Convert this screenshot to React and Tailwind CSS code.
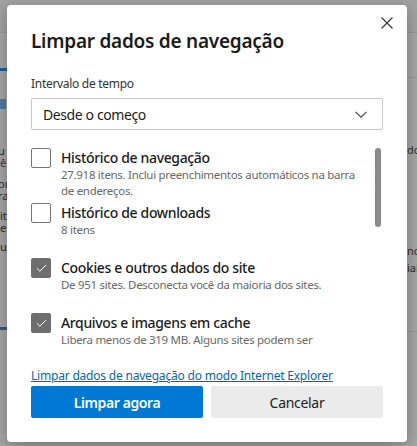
import { Check } from "lucide-react";

const items = [
  {
    id: "history",
    title: "Histórico de navegação",
    desc: "27.918 itens. Inclui preenchimentos automáticos na barra de endereços.",
    checked: false,
  },
  { id: "downloads", title: "Histórico de downloads", desc: "8 itens", checked: false },
  {
    id: "cookies",
    title: "Cookies e outros dados do site",
    desc: "De 951 sites. Desconecta você da maioria dos sites.",
    checked: true,
  },
  {
    id: "cache",
    title: "Arquivos e imagens em cache",
    desc: "Libera menos de 319 MB. Alguns sites podem ser carregados mais lentamente na próxima visita.",
    checked: true,
  },
];

function CheckBox({ checked }) {
  if (checked) {
    return (
      <span className="flex h-[20px] w-[20px] shrink-0 items-center justify-center rounded-[2px] bg-[#6e6e6e]">
        <Check size={13} strokeWidth={1.8} className="text-white" />
      </span>
    );
  }
  return <span className="h-[20px] w-[20px] shrink-0 rounded-[2px] border border-[#767676] bg-white" />;
}

// faded page that sits behind the modal
function BackPage() {
  return (
    <div className="flex h-full flex-col bg-[#a6a6a6] text-[11px] text-[#2c2c2c]">
      <div className="h-[33px] border-b border-[#959595] bg-[#a2a2a2]" />
      <div className="flex flex-1 justify-between">
        <div className="flex w-[8px] flex-col overflow-hidden">
          <div className="mt-[35px] h-[3px] w-[8px] bg-[#255f95]" />
          <div className="mt-[28px] h-[10px] w-[6px] rounded-[1px] bg-[#4b7ba8]" />
          <div className="mt-[36px] flex flex-col leading-[12px]">
            <span className="-ml-[2px]">u</span>
            <span className="text-[#4b2a5a]">ê</span>
            <span className="mt-[9px] -ml-[2px]">on</span>
            <span className="-ml-[2px]">ra</span>
            <span className="mt-[8px]">it</span>
            <span>er</span>
            <span className="mt-[7px]">u</span>
          </div>
          <div className="mt-[74px] h-[3px] w-[8px] bg-[#255f95]" />
        </div>
        <div className="flex w-[10px] flex-col overflow-hidden">
          <div className="mt-[44px] h-px w-[10px] bg-[#959595]" />
          <div className="mt-[66px] leading-[12px]">dc</div>
          <div className="mt-[86px] flex flex-col leading-[17px]">
            <span>nc</span>
            <span>iai</span>
          </div>
          <div className="mt-[55px] h-px w-[10px] bg-[#959595]" />
        </div>
      </div>
    </div>
  );
}

export default function App() {
  return (
    <div
      className="relative h-[446px] w-[417px] overflow-hidden"
      style={{ fontFamily: '"Noto Sans", "Open Sans", sans-serif' }}
    >
      <BackPage />

      {/* Modal */}
      <div className="absolute left-[7px] top-[5px] flex h-[437px] w-[400px] flex-col rounded-[4px] bg-white px-6 pb-6 shadow-[0_4px_16px_rgba(0,0,0,0.3)]">
        <button className="absolute right-[14px] top-[12px] text-[#333]">
          <svg width="12" height="12" viewBox="0 0 12 12" fill="none" stroke="currentColor" strokeWidth="1.1">
            <path d="M0.5 0.5L11.5 11.5M11.5 0.5L0.5 11.5" />
          </svg>
        </button>

        <h1 className="mt-[23px] text-[19px] font-semibold leading-[26px] tracking-[-0.25px] text-[#1b1b1b]">
          Limpar dados de navegação
        </h1>

        <label className="mt-[21px] text-[12px] leading-[18px] tracking-[-0.3px] text-[#333]">
          Intervalo de tempo
        </label>
        <div className="mt-[5px] flex h-[32px] items-center justify-between rounded-[2px] border border-[#c8c8c8] pl-[11px] pr-[15px]">
          <span className="text-[14px] tracking-[-0.4px] text-[#1b1b1b]">Desde o começo</span>
          <svg width="12" height="7" viewBox="0 0 12 7" fill="none" stroke="#444" strokeWidth="1.1">
            <path d="M0.5 0.8L6 6.2L11.5 0.8" />
          </svg>
        </div>

        <div className="mt-[18px] flex h-[203px] overflow-hidden">
          <div className="flex flex-1 flex-col pr-[2px]">
            {items.map((item) => (
              <div key={item.id} className="flex min-h-[55px] shrink-0 gap-[10px]">
                <CheckBox checked={item.checked} />
                <div className="flex max-w-[300px] flex-col">
                  <span className="text-[14px] font-medium leading-[19px] tracking-[-0.35px] text-[#1b1b1b]">
                    {item.title}
                  </span>
                  <span className="text-[11.5px] leading-[16px] tracking-[-0.3px] text-[#686868]">{item.desc}</span>
                </div>
              </div>
            ))}
          </div>
          <div className="w-[8px] shrink-0">
            <div className="h-[79px] w-[6px] rounded-full bg-[#8a8a8a]" />
          </div>
        </div>

        <a href="#" className="mt-auto text-[12px] leading-[18px] tracking-[-0.2px] text-[#0067b8] underline">
          Limpar dados de navegação do modo Internet Explorer
        </a>
        <div className="mt-[1px] flex gap-2">
          <button className="h-[32px] flex-1 rounded-[2px] bg-[#0078d4] text-[14px] font-semibold tracking-[-0.4px] text-white">
            Limpar agora
          </button>
          <button className="h-[32px] flex-1 rounded-[2px] bg-[#ebebeb] text-[14px] tracking-[-0.3px] text-[#1b1b1b]">
            Cancelar
          </button>
        </div>
      </div>
    </div>
  );
}
